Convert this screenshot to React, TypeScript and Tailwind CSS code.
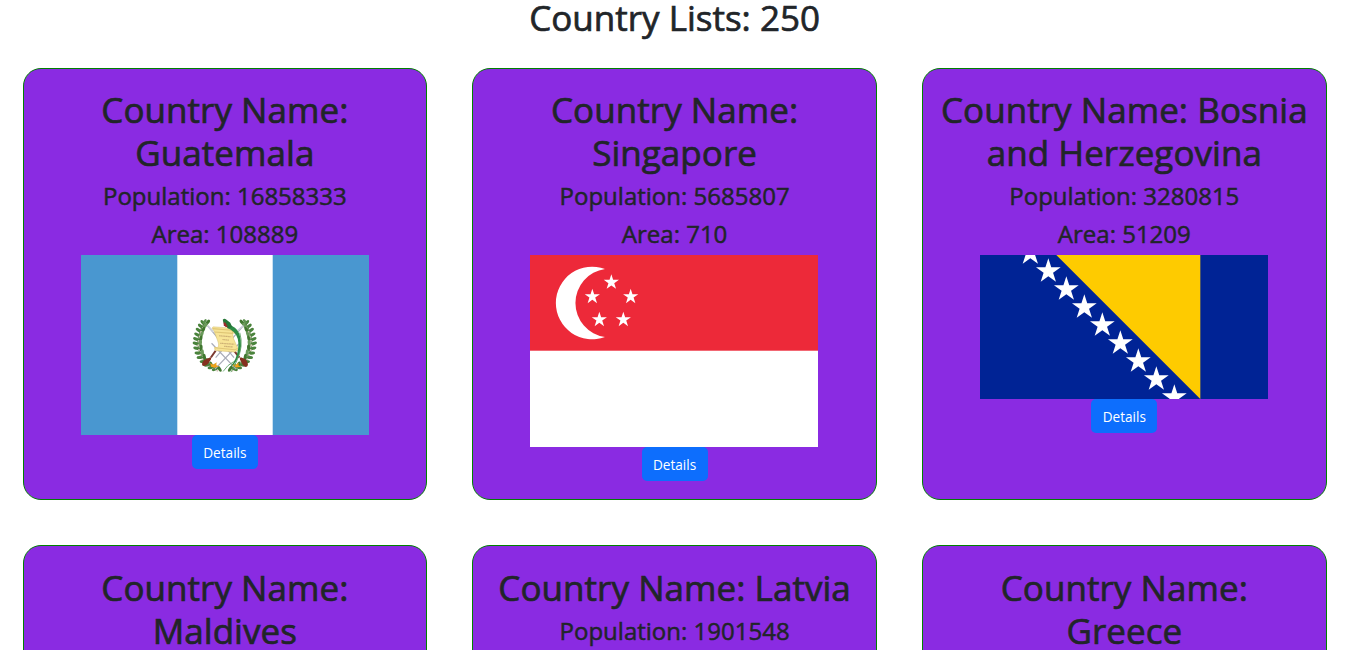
import type { ReactNode } from "react";

type Point = [number, number];

function starPoints(cx: number, cy: number, r: number): string {
  return Array.from({ length: 10 }, (_, i) => {
    const radius = i % 2 === 0 ? r : r * 0.382;
    const angle = (Math.PI / 5) * i - Math.PI / 2;
    return `${(cx + radius * Math.cos(angle)).toFixed(2)},${(cy + radius * Math.sin(angle)).toFixed(2)}`;
  }).join(" ");
}

const branch: Point[] = [
  [105, 66], [98, 76], [92, 88], [88, 101], [85, 114], [84, 127], [86, 141],
  [90, 155], [96, 168], [105, 180], [116, 190], [128, 197], [140, 202],
];

function Laurel() {
  return (
    <g>
      <polyline points={branch.map((p) => p.join(",")).join(" ")} fill="none" stroke="#7f9a6b" strokeWidth="5" />
      {branch.map(([x, y], i) => {
        const lean = -8 - i * 6;
        return (
          <g key={i}>
            <ellipse cx={x - 6} cy={y} rx="4.6" ry="10" fill="#4a833c" transform={`rotate(${lean - 32} ${x - 6} ${y})`} />
            <ellipse cx={x + 7} cy={y - 1} rx="4.6" ry="10" fill={i % 2 ? "#6b9a5b" : "#40772f"} transform={`rotate(${lean + 48} ${x + 7} ${y - 1})`} />
            <circle cx={x + 1} cy={y + 5} r="2.8" fill="#d9c9bd" />
          </g>
        );
      })}
      <ellipse cx="104" cy="62" rx="4" ry="8" fill="#5d9150" transform="rotate(35 104 62)" />
    </g>
  );
}

function GuatemalaFlag() {
  return (
    <svg className="block h-[180px] w-72" viewBox="0 0 288 180">
      <rect width="288" height="180" fill="#4997d0" />
      <rect x="96.3" width="95.4" height="180" fill="#fff" />
      <g transform="translate(88.4 45.4) scale(.34)">
        <Laurel />
        <g transform="translate(326 0) scale(-1 1)"><Laurel /></g>
        <path d="M112 74 190 168M218 74l-82 94M124 126l72 76M206 126l-72 76" stroke="#a9acb8" strokeWidth="3.5" fill="none" />
        <path d="M113 75l16 17M217 75l-16 14" stroke="#ced2dc" strokeWidth="5" />
        <path d="m136 148-14 20M190 148l16 20" stroke="#7b3a30" strokeWidth="6" />
        <path d="M96 187q0-9 12-15l13-5q5 4-2 11-6 13-18 15-6 0-5-6ZM231 187q0-9-9-15l-12-5q-6 4 0 11 4 13 14 18 7 0 7-9Z" fill="#85301f" />
        <path d="m120 184 9 5 10-7-1 9 8 3-13 4-11-3ZM186 186l9 3 9-6-1 8 7 4-13 2-10-4Z" fill="#eea21b" />
        <path d="M126 82q0-6 8-4l54 4q8 1 8 8l-2 7-8-1q0 16 9 31 7 12 6 20l-9 5-52-4q-9 0-7-10l8 1q7-5 1-20l-10-28Z" fill="#f7e495" stroke="#d6bd6c" strokeWidth="1.5" />
        <path d="m127 83 56 5q6 5 2 9l-53-4M134 139l58 6q7-1 8-5" fill="none" stroke="#dfc675" strokeWidth="3" />
        <path d="M146 104l36 3M156 115l19 2M149 126l42 3M161 135l26 2" stroke="#cdb074" strokeWidth="3.5" strokeDasharray="4 1" />
        <path d="M171 72q26 2 35 27 12 38-5 71-9 20-22 25 19-21 23-52 5-34-13-50-7-8-19-12Z" fill="#2d8c45" />
        <path d="M207 95q12 40-9 83-9 22-17 33M189 180q-18 9-31 29" fill="none" stroke="#5aa061" strokeWidth="2.5" />
        <path d="M157 57q4-6 10-1l12 10 6 12-11 4-12-8-4-12Z" fill="#257637" />
        <path d="m159 64 6 2 7 13q-9 0-12-6Z" fill="#9b2a2a" />
      </g>
    </svg>
  );
}

const singaporeStars: Point[] = [[274, 97], [217, 140], [332, 140], [238, 209], [310, 209]];

function SingaporeFlag() {
  return (
    <svg className="mr-[0.4px] block h-48 w-72" viewBox="0 0 288 192">
      <rect width="288" height="192" fill="#fff" />
      <rect width="288" height="95.7" fill="#ed2939" />
      <g transform="scale(.33333) translate(-30 -15)" fill="#fff">
        <path d="M255 57A109 109 0 1 0 255 261A103 103 0 0 1 255 57Z" />
        {singaporeStars.map(([x, y]) => <polygon key={x} points={starPoints(x, y, 24)} />)}
      </g>
    </svg>
  );
}

function BosniaFlag() {
  return (
    <svg className="block h-36 w-72" viewBox="0 0 288 144">
      <rect width="288" height="144" fill="#002395" />
      <g transform="scale(.33333) translate(-30 -15)">
        <path d="M259 15H691V447Z" fill="#fecb00" />
        {Array.from({ length: 9 }, (_, i) => (
          <polygon key={i} points={starPoints(181 + 54 * i, 10 + 54 * i, 39)} fill="#fff" />
        ))}
      </g>
    </svg>
  );
}

interface Country {
  name: string;
  population?: number;
  area?: number;
  flag?: ReactNode;
}

const countries: Country[] = [
  { name: "Guatemala", population: 16858333, area: 108889, flag: <GuatemalaFlag /> },
  { name: "Singapore", population: 5685807, area: 710, flag: <SingaporeFlag /> },
  { name: "Bosnia and Herzegovina", population: 3280815, area: 51209, flag: <BosniaFlag /> },
  { name: "Maldives" },
  { name: "Latvia", population: 1901548 },
  { name: "Greece" },
];

function CountryCard({ name, population, area, flag }: Country) {
  return (
    <article className="flex h-[432px] flex-col items-center rounded-[18px] border border-[green] bg-[#8a2be2] px-[17px] pt-[19.2px] text-center">
      <h2 className="mb-[6.9px] text-[35px] leading-[43.2px] font-medium tracking-[0.05px] [-webkit-text-stroke:0.7px]">Country Name: {name}</h2>
      {population && <h3 className="mb-[7.2px] text-[24px] leading-[30.24px] font-medium [-webkit-text-stroke:0.5px]">Population: {population}</h3>}
      {area && <h3 className="mb-[5.6px] text-[24px] leading-[30.24px] font-medium [-webkit-text-stroke:0.5px]">Area: {area}</h3>}
      {flag}
      {flag && (
        <button className="h-[34px] w-[66px] shrink-0 rounded-[5px] bg-[#0d6efd] pt-[2px] text-[13.6px] leading-[21px] text-white">Details</button>
      )}
    </article>
  );
}

export default function App() {
  return (
    <div className="h-[650px] overflow-hidden bg-white font-['Open_Sans',sans-serif] text-[#212529]">
      <div className="w-[1349.2px]">
        <h1 className="-mt-[4px] text-center text-[35px] leading-[43.2px] font-medium [-webkit-text-stroke:0.7px]">Country Lists: 250</h1>
        <main className="mt-[28.8px] grid grid-cols-3 gap-x-[45px] gap-y-[45.4px] px-[22.5px]">
          {countries.map((country) => <CountryCard key={country.name} {...country} />)}
        </main>
      </div>
    </div>
  );
}
